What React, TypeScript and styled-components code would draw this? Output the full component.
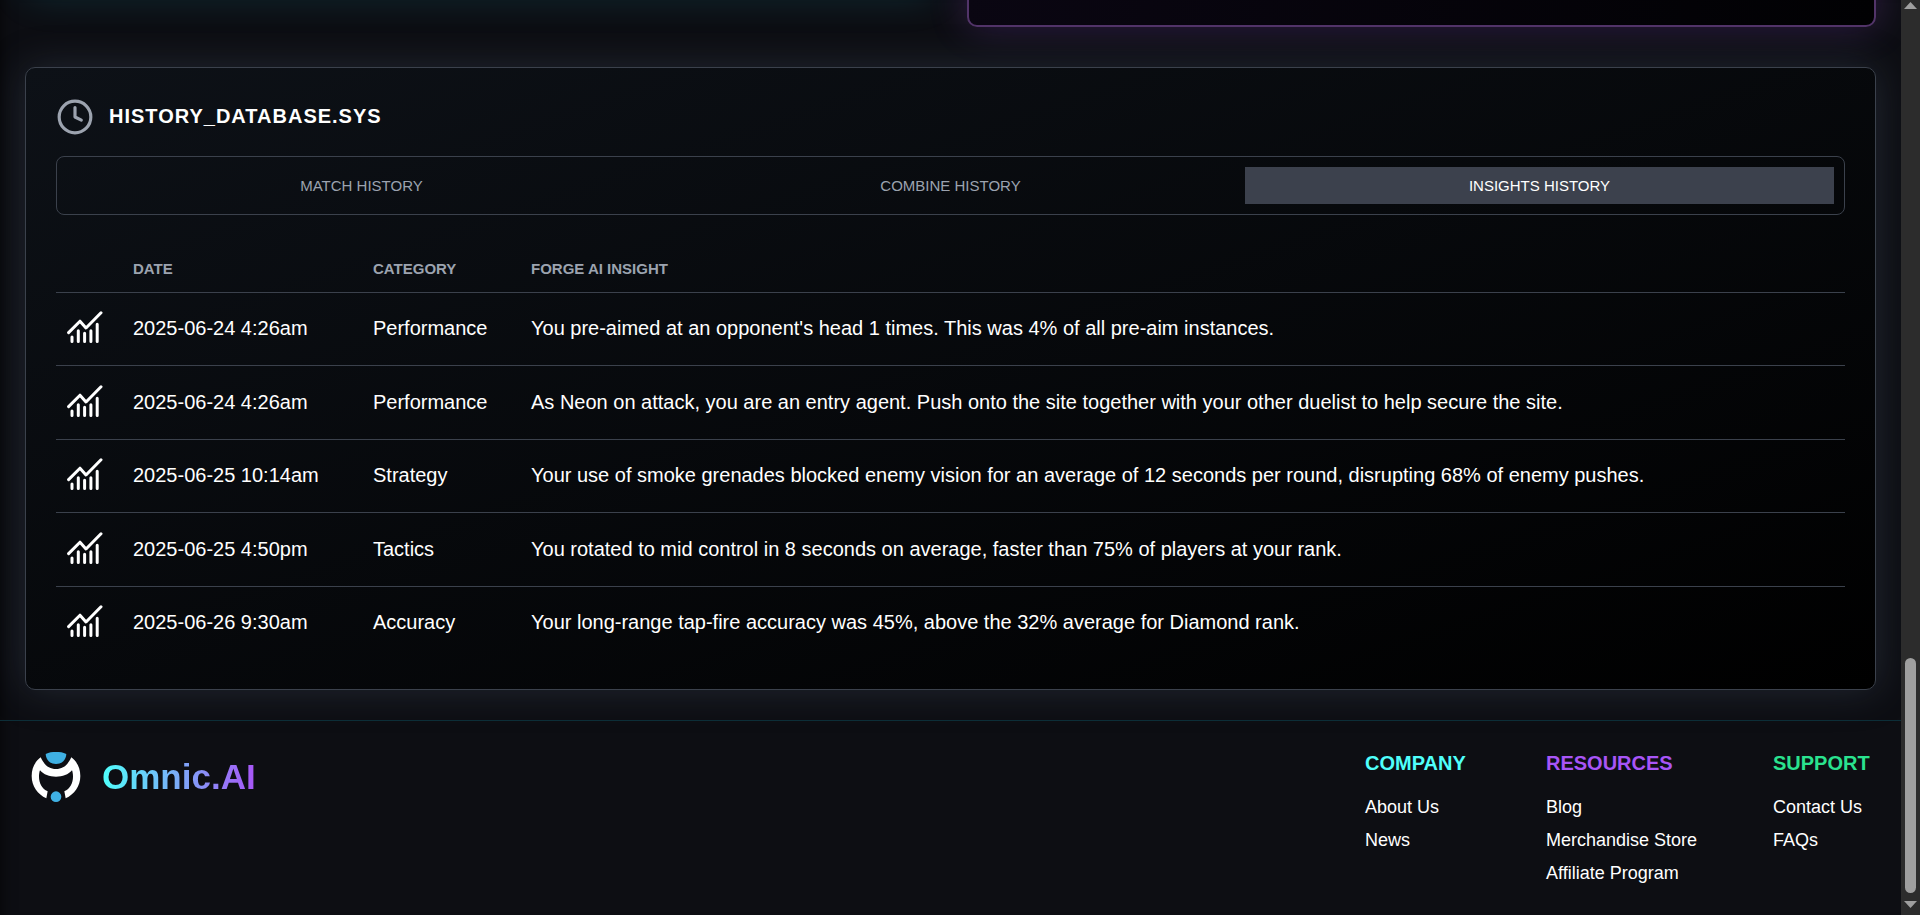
import React from "react";
import styled, { createGlobalStyle, css } from "styled-components";
import { Clock } from "lucide-react";

const GlobalStyle = createGlobalStyle`
  *, *::before, *::after { box-sizing: border-box; }
  body {
    margin: 0;
    background: #0d0e13;
    color: #fff;
    font-family: "Liberation Sans", Arial, sans-serif;
    font-size: 20px;
  }
`;

const Screen = styled.div`
  display: flex;
  height: 100vh;
  overflow: hidden;
`;

const Page = styled.div`
  flex: 1;
  min-width: 0;
  display: flex;
  flex-direction: column;
  overflow: hidden;
  box-shadow: inset 16px 0 16px -16px rgba(0, 0, 0, 0.7);
`;

const Content = styled.main`
  display: flex;
  flex-direction: column;
  gap: 40px;
  padding: 0 25px 30px;
`;

const PanelRow = styled.div`
  display: grid;
  grid-template-columns: 1fr 1fr;
  grid-template-rows: 27px;
  column-gap: 32px;
  align-items: end;
`;

const Panel = styled.section<{ $tone: "cyan" | "purple" }>`
  height: 60px;
  border: 2px solid;
  border-radius: 10px;
  ${({ $tone }) =>
    $tone === "cyan"
      ? css`
          margin-bottom: 30px;
          border-color: #1d5560;
          background: #060a10;
          box-shadow: 0 0 38px rgba(34, 211, 238, 0.15);
        `
      : css`
          border-color: #523469;
          background: linear-gradient(100deg, #0a0612, #010103);
          box-shadow: 0 0 38px rgba(168, 85, 247, 0.23);
        `}
`;

const HistoryCard = styled.section`
  padding: 30px;
  border: 1px solid #3b414c;
  border-radius: 10px;
  background: linear-gradient(to bottom right, #0d1117, #000);
  box-shadow: 0 0 38px rgba(75, 90, 110, 0.34);
`;

const CardHeader = styled.header`
  display: flex;
  align-items: center;
  gap: 15px;
  margin-bottom: 20px;
  color: #9ca3af;
`;

const CardTitle = styled.h2`
  margin: 0;
  padding-bottom: 2px;
  color: #fff;
  font-size: 20px;
  line-height: 24px;
  letter-spacing: 1px;
`;

const Tabs = styled.div`
  display: flex;
  margin-bottom: 30px;
  padding: 10px;
  border: 1px solid #3b414c;
  border-radius: 8px;
`;

const Tab = styled.button<{ $active?: boolean }>`
  flex: 1;
  height: 37px;
  padding: 0;
  border: 0;
  background: ${({ $active }) => ($active ? "#3c414d" : "transparent")};
  color: ${({ $active }) => ($active ? "#fff" : "#9ca3af")};
  font-family: inherit;
  font-size: 15px;
  cursor: pointer;
`;

const Table = styled.table`
  width: 100%;
  border-collapse: separate;
  border-spacing: 0;
  table-layout: fixed;
`;

const HeadCell = styled.th<{ $width?: number }>`
  width: ${({ $width }) => ($width ? `${$width}px` : "auto")};
  height: 48px;
  padding: 0 10px;
  border-bottom: 1px solid #3b414c;
  color: #9ca3af;
  font-size: 15px;
  text-align: left;
`;

const Cell = styled.td`
  padding: 0 10px 2px;
  border-bottom: 1px solid #3b414c;
  line-height: 24px;
`;

const Row = styled.tr`
  height: 73px;

  &:nth-child(even) {
    height: 74px;
  }

  &:last-child {
    height: 72px;
  }

  &:last-child ${Cell} {
    border-bottom: 0;
  }
`;

const ChartIcon = styled.svg`
  display: block;
  width: 38px;
  height: 34px;
`;

const Footer = styled.footer`
  display: flex;
  justify-content: space-between;
  padding: 30px;
  border-top: 1px solid #0c2e38;
`;

const Brand = styled.a`
  display: flex;
  align-items: center;
  align-self: flex-start;
  gap: 20px;
  text-decoration: none;
`;

const BrandName = styled.span`
  background: linear-gradient(90deg, #4ffffb, #a855f7);
  background-clip: text;
  -webkit-background-clip: text;
  color: transparent;
  font-size: 35px;
  font-weight: 700;
  line-height: 40px;
`;

const LinkColumns = styled.nav`
  display: grid;
  grid-template-columns: 101px 147px 98px;
  gap: 80px;
`;

const ColumnTitle = styled.h3<{ $color: string }>`
  margin: 0 0 20px;
  color: ${({ $color }) => $color};
  font-size: 20px;
  line-height: 24px;
`;

const LinkList = styled.ul`
  display: flex;
  flex-direction: column;
  gap: 9px;
  margin: 0;
  padding: 0;
  list-style: none;
`;

const FooterLink = styled.a`
  display: block;
  color: #fff;
  font-size: 18px;
  line-height: 24px;
  text-decoration: none;
  white-space: nowrap;
`;

const ScrollBar = styled.div`
  display: flex;
  flex-direction: column;
  align-items: center;
  justify-content: space-between;
  width: 19px;
  padding: 2px 0 7px;
  background: #2c2c2c;
`;

const ScrollEnd = styled.div`
  display: flex;
  flex-direction: column;
  align-items: center;
  gap: 8px;
`;

const Thumb = styled.div`
  width: 11px;
  height: 235px;
  border-radius: 6px;
  background: #9f9f9f;
`;

const Arrow = styled.svg`
  display: block;
  width: 13px;
  height: 7px;
  fill: #9f9f9f;
`;

const insights = [
  ["2025-06-24 4:26am", "Performance", "You pre-aimed at an opponent's head 1 times. This was 4% of all pre-aim instances."],
  ["2025-06-24 4:26am", "Performance", "As Neon on attack, you are an entry agent. Push onto the site together with your other duelist to help secure the site."],
  ["2025-06-25 10:14am", "Strategy", "Your use of smoke grenades blocked enemy vision for an average of 12 seconds per round, disrupting 68% of enemy pushes."],
  ["2025-06-25 4:50pm", "Tactics", "You rotated to mid control in 8 seconds on average, faster than 75% of players at your rank."],
  ["2025-06-26 9:30am", "Accuracy", "Your long-range tap-fire accuracy was 45%, above the 32% average for Diamond rank."],
];

const columns = [
  { title: "COMPANY", color: "#4ffffb", links: ["About Us", "News"] },
  { title: "RESOURCES", color: "#a855f7", links: ["Blog", "Merchandise Store", "Affiliate Program"] },
  { title: "SUPPORT", color: "#2ae28f", links: ["Contact Us", "FAQs"] },
];

const InsightIcon = () => (
  <ChartIcon viewBox="-1 0 38 34" fill="none" stroke="#fff" strokeWidth="3" strokeLinecap="round" aria-hidden="true">
    <path d="M1.6 21.6 13 10.2 19 17 34 1.8" strokeLinejoin="round" />
    <path d="M5 26V30.6M11.3 19.8V30.6M17.6 22.2V30.6M23.9 19.8V30.6M30.2 13.2V30.6" />
  </ChartIcon>
);

const Logo = () => (
  <svg width="52" height="52" viewBox="30 33 156 156" aria-hidden="true">
    <path
      fill="#fff"
      d="M62 52C74 77 88 87 108 87S142 77 154 52C171 65 181 84 181 108C181 138 163 163 137 175L133 154C150 146 159 129 159 110C159 103 158 96 156 91C145 104 128 110 108 110S71 104 60 91C58 96 57 103 57 110C57 129 66 146 83 154L79 175C53 163 35 138 35 108C35 84 45 65 62 52Z"
    />
    <path fill="#3fb0e3" d="M77 42C87 37 97 36 108 36S129 37 139 42C138 60 126 72 108 72S78 60 77 42Z" />
    <circle cx="108" cy="170" r="16" fill="#3fb0e3" />
  </svg>
);

export default function App() {
  return (
    <>
      <GlobalStyle />
      <Screen>
        <Page>
          <Content>
            <PanelRow>
              <Panel $tone="cyan" />
              <Panel $tone="purple" />
            </PanelRow>
            <HistoryCard>
              <CardHeader>
                <Clock size={38} aria-hidden="true" />
                <CardTitle>HISTORY_DATABASE.SYS</CardTitle>
              </CardHeader>
              <Tabs role="tablist">
                <Tab role="tab">MATCH HISTORY</Tab>
                <Tab role="tab">COMBINE HISTORY</Tab>
                <Tab role="tab" aria-selected="true" $active>INSIGHTS HISTORY</Tab>
              </Tabs>
              <Table>
                <thead>
                  <tr>
                    <HeadCell $width={67} aria-label="Type" />
                    <HeadCell $width={240}>DATE</HeadCell>
                    <HeadCell $width={158}>CATEGORY</HeadCell>
                    <HeadCell>FORGE AI INSIGHT</HeadCell>
                  </tr>
                </thead>
                <tbody>
                  {insights.map(([date, category, text]) => (
                    <Row key={text}>
                      <Cell><InsightIcon /></Cell>
                      <Cell>{date}</Cell>
                      <Cell>{category}</Cell>
                      <Cell>{text}</Cell>
                    </Row>
                  ))}
                </tbody>
              </Table>
            </HistoryCard>
          </Content>
          <Footer>
            <Brand href="#">
              <Logo />
              <BrandName>Omnic.AI</BrandName>
            </Brand>
            <LinkColumns>
              {columns.map(({ title, color, links }) => (
                <div key={title}>
                  <ColumnTitle $color={color}>{title}</ColumnTitle>
                  <LinkList>
                    {links.map((link) => (
                      <li key={link}><FooterLink href="#">{link}</FooterLink></li>
                    ))}
                  </LinkList>
                </div>
              ))}
            </LinkColumns>
          </Footer>
        </Page>
        <ScrollBar aria-hidden="true">
          <Arrow viewBox="0 0 13 7"><path d="M6.5 0 13 7H0Z" /></Arrow>
          <ScrollEnd>
            <Thumb />
            <Arrow viewBox="0 0 13 7"><path d="M0 0H13L6.5 7Z" /></Arrow>
          </ScrollEnd>
        </ScrollBar>
      </Screen>
    </>
  );
}
